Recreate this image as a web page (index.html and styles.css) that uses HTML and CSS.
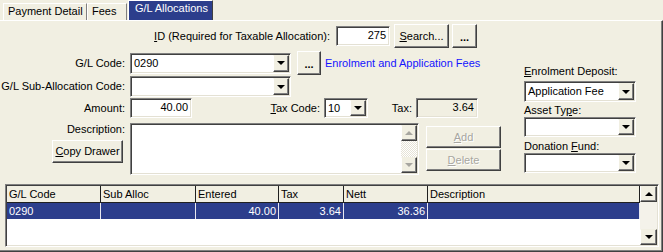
FILE: index.html
```html
<!DOCTYPE html>
<html lang="en">
<head>
    <meta charset="UTF-8">
    <title>G/L Allocations</title>
    <link rel="stylesheet" href="styles.css">
</head>
<body>
<div class="window">
    <div class="tabs">
        <div class="tab tab_first">Payment Detail</div>
        <div class="tab tab_fees">Fees</div>
        <div class="tab tab_active">G/L Allocations</div>
    </div>
    <div class="panel">
        <div class="id_row">
            <span class="id_label"><u>I</u>D (Required for Taxable Allocation):</span>
            <div class="edit edit_num id_edit">275</div>
            <div class="btn btn_search"><u>S</u>earch...</div>
            <div class="btn btn_dots btn_dots_id">...</div>
        </div>
        <div class="body">
            <div class="main">
                <div class="row row_gl">
                    <span class="lbl">G/L Code:</span>
                    <div class="combo combo_gl"><span class="combo_text">0290</span><span class="drop"></span></div>
                    <div class="btn btn_dots">...</div>
                    <span class="link">Enrolment and Application Fees</span>
                </div>
                <div class="row row_sub">
                    <span class="lbl">G/L Sub-Allocation Code:</span>
                    <div class="combo combo_gl"><span class="combo_text"></span><span class="drop"></span></div>
                </div>
                <div class="row row_amount">
                    <span class="lbl">Amount:</span>
                    <div class="edit edit_num amount_edit">40.00</div>
                    <span class="lbl_tax_code"><u>T</u>ax Code:</span>
                    <div class="combo combo_tax"><span class="combo_text">10</span><span class="drop"></span></div>
                    <span class="lbl_tax">Tax:</span>
                    <div class="edit edit_num edit_ro tax_edit">3.64</div>
                </div>
                <div class="row row_desc">
                    <div class="desc_side">
                        <span class="desc_label">Description:</span>
                        <div class="btn btn_copy"><u>C</u>opy Drawer</div>
                    </div>
                    <div class="memo">
                        <div class="memo_text"></div>
                        <div class="memo_scroll">
                            <div class="sbtn sbtn_off"><span class="arrow_up"></span></div>
                            <div class="memo_track"></div>
                            <div class="sbtn sbtn_off"><span class="arrow_down"></span></div>
                        </div>
                    </div>
                    <div class="actions">
                        <div class="btn btn_off btn_add"><u>A</u>dd</div>
                        <div class="btn btn_off btn_delete"><u>D</u>elete</div>
                    </div>
                </div>
            </div>
            <div class="side">
                <span class="side_label side_label_first"><u>E</u>nrolment Deposit:</span>
                <div class="combo combo_side combo_deposit"><span class="combo_text">Application Fee</span><span class="drop"></span></div>
                <span class="side_label side_label_asset">Asset Ty<u>p</u>e:</span>
                <div class="combo combo_side"><span class="combo_text"></span><span class="drop"></span></div>
                <span class="side_label side_label_fund">Donation <u>F</u>und:</span>
                <div class="combo combo_side"><span class="combo_text"></span><span class="drop"></span></div>
            </div>
        </div>
        <div class="grid">
            <div class="grid_table">
                <table>
                    <colgroup>
                        <col style="width:94px">
                        <col style="width:95px">
                        <col style="width:83px">
                        <col style="width:65px">
                        <col style="width:84px">
                        <col style="width:212px">
                    </colgroup>
                    <thead>
                    <tr>
                        <th>G/L Code</th>
                        <th>Sub Alloc</th>
                        <th>Entered</th>
                        <th>Tax</th>
                        <th>Nett</th>
                        <th>Description</th>
                    </tr>
                    </thead>
                    <tbody>
                    <tr class="selected">
                        <td>0290</td>
                        <td></td>
                        <td class="num">40.00</td>
                        <td class="num">3.64</td>
                        <td class="num">36.36</td>
                        <td></td>
                    </tr>
                    </tbody>
                </table>
            </div>
            <div class="grid_scroll">
                <div class="sbtn sbtn_grid"><span class="arrow_up"></span></div>
                <div class="grid_track"></div>
                <div class="sbtn sbtn_grid"><span class="arrow_down"></span></div>
            </div>
        </div>
    </div>
</div>
</body>
</html>
```

FILE: styles.css
```css
body {
    margin: 0;
    background: #f1efe2;
    font-family: "Liberation Sans", Arial, sans-serif;
    font-size: 11px;
    line-height: 13px;
    color: #000;
}
u {
    text-underline-offset: 1px;
}
.window {
    width: 663px;
    height: 252px;
    overflow: hidden;
}

/* tabs */
.tabs {
    display: flex;
    align-items: flex-end;
    height: 20px;
    padding-left: 3px;
}
.tab {
    box-sizing: border-box;
    height: 17px;
    padding: 1px 0 0 4px;
    border-top: 1px solid #fff;
    border-left: 1px solid #fff;
    border-right: 1px solid #808080;
    white-space: nowrap;
}
.tab_first {
    width: 84px;
}
.tab_fees {
    width: 40px;
}
.tab_active {
    width: 85px;
    height: 20px;
    margin-left: 1px;
    padding: 1px 0 0 6px;
    background: #2c3e8c;
    color: #fff;
    border-right-color: #404040;
}

/* panel */
.panel {
    box-sizing: border-box;
    width: 663px;
    height: 232px;
    padding-top: 3px;
    border-top: 1px solid #fff;
    border-right: 1px solid #404040;
    border-bottom: 1px solid #404040;
    box-shadow: inset -1px -1px 0 #808080;
}

/* common controls */
.edit {
    box-sizing: border-box;
    height: 20px;
    background: #fff;
    border: 1px solid;
    border-color: #808080 #fff #fff #808080;
    box-shadow: inset 1px 1px 0 #404040, inset -1px -1px 0 #e4e1d4;
    padding: 2px 3px 0 3px;
    white-space: nowrap;
}
.edit_num {
    text-align: right;
}
.edit_ro {
    background: #f1efe2;
}
.btn {
    box-sizing: border-box;
    display: flex;
    align-items: center;
    justify-content: center;
    background: #f1efe2;
    border: 1px solid;
    border-color: #fff #404040 #404040 #fff;
    box-shadow: inset -1px -1px 0 #808080;
    white-space: nowrap;
}
.btn_off {
    color: #a7a6a0;
    text-shadow: 1px 1px 0 #fff;
}
.btn_dots {
    width: 24px;
    height: 24px;
    font-weight: bold;
    padding-top: 3px;
}
.combo {
    box-sizing: border-box;
    display: flex;
    height: 21px;
    background: #fff;
    border: 1px solid;
    border-color: #808080 #fff #fff #808080;
    box-shadow: inset 1px 1px 0 #404040, inset -1px -1px 0 #e4e1d4;
    padding: 1px;
}
.combo_text {
    flex: 1;
    padding: 2px 0 0 2px;
    white-space: nowrap;
}
.drop {
    box-sizing: border-box;
    width: 16px;
    display: flex;
    align-items: center;
    justify-content: center;
    background: #f1efe2;
    border: 1px solid;
    border-color: #f1efe2 #404040 #404040 #fff;
    box-shadow: inset -1px -1px 0 #808080;
}
.drop::after {
    content: "";
    border-left: 4px solid transparent;
    border-right: 4px solid transparent;
    border-top: 4px solid #000;
    margin-left: -1px;
}

/* id row */
.id_row {
    display: flex;
    align-items: center;
    height: 24px;
}
.id_label {
    width: 330px;
    text-align: right;
}
.id_edit {
    width: 54px;
    margin-left: 6px;
}
.btn_search {
    width: 55px;
    height: 24px;
    margin-left: 4px;
}
.btn_dots_id {
    width: 25px;
    margin-left: 3px;
}

/* body */
.body {
    display: flex;
    margin-top: 3px;
}
.main {
    width: 524px;
}
.row {
    display: flex;
    align-items: center;
}
.lbl {
    width: 125px;
    text-align: right;
    white-space: nowrap;
}
.row_gl {
    height: 24px;
}
.row_gl .btn_dots {
    margin-left: 6px;
}
.combo_gl {
    width: 161px;
    margin-left: 5px;
}
.link {
    margin-left: 4px;
    color: #1414ff;
    white-space: nowrap;
}
.row_sub {
    height: 21px;
    margin-top: 1px;
}
.row_amount {
    height: 20px;
    margin-top: 1px;
}
.amount_edit {
    width: 62px;
    margin-left: 5px;
}
.lbl_tax_code {
    width: 128px;
    text-align: right;
}
.combo_tax {
    width: 44px;
    height: 20px;
    margin-left: 4px;
}
.lbl_tax {
    width: 44px;
    text-align: right;
}
.tax_edit {
    width: 62px;
    margin-left: 4px;
}

/* description */
.row_desc {
    align-items: flex-start;
    margin-top: 5px;
    height: 52px;
}
.desc_side {
    width: 125px;
    display: flex;
    flex-direction: column;
    align-items: flex-end;
}
.btn_copy {
    width: 71px;
    height: 23px;
    margin: 4px 2px 0 0;
}
.memo {
    box-sizing: border-box;
    display: flex;
    width: 289px;
    height: 52px;
    margin-left: 5px;
    background: #fff;
    border: 1px solid;
    border-color: #808080 #fff #fff #808080;
    box-shadow: inset 1px 1px 0 #404040, inset -1px -1px 0 #e4e1d4;
    padding: 1px;
}
.memo_text {
    flex: 1;
}
.memo_scroll {
    width: 16px;
    display: flex;
    flex-direction: column;
}
.memo_track {
    flex: 1;
    background: repeating-conic-gradient(#fff 0 25%, #e6e3d6 0 50%) 0 0 / 2px 2px;
}
.sbtn {
    box-sizing: border-box;
    height: 16px;
    display: flex;
    align-items: center;
    justify-content: center;
    background: #f1efe2;
    border: 1px solid;
    border-color: #f1efe2 #404040 #404040 #fff;
    box-shadow: inset -1px -1px 0 #808080;
}
.arrow_up {
    border-left: 4px solid transparent;
    border-right: 4px solid transparent;
    border-bottom: 4px solid #000;
}
.arrow_down {
    border-left: 4px solid transparent;
    border-right: 4px solid transparent;
    border-top: 4px solid #000;
}
.sbtn_off .arrow_up {
    border-bottom-color: #a7a6a0;
}
.sbtn_off .arrow_down {
    border-top-color: #a7a6a0;
}
.actions {
    display: flex;
    flex-direction: column;
    margin-left: 7px;
}
.btn_add,
.btn_delete {
    width: 75px;
    height: 22px;
}
.btn_add {
    margin-top: 3px;
}
.btn_delete {
    margin-top: 1px;
}

/* right column */
.side {
    width: 112px;
    display: flex;
    flex-direction: column;
    margin-top: 14px;
}
.side_label {
    white-space: nowrap;
}
.combo_side {
    height: 20px;
}
.combo_deposit {
    height: 21px;
    margin-top: 3px;
}
.side_label_asset {
    margin-top: 2px;
}
.side_label_fund {
    margin-top: 3px;
}

/* grid */
.grid {
    box-sizing: border-box;
    display: flex;
    width: 654px;
    height: 63px;
    margin: 9px 0 0 5px;
    background: #fff;
    border: 1px solid;
    border-color: #808080 #fff #fff #808080;
    box-shadow: inset 1px 1px 0 #404040, inset -1px -1px 0 #e4e1d4;
    padding: 1px;
}
.grid_table {
    width: 633px;
}
table {
    border-collapse: separate;
    border-spacing: 0;
    table-layout: fixed;
    width: 633px;
}
th {
    box-sizing: border-box;
    height: 17px;
    padding: 0 2px;
    font-weight: normal;
    text-align: left;
    line-height: 16px;
    background: #f1efe2;
    border-right: 1px solid #202020;
    border-bottom: 1px solid #202020;
    white-space: nowrap;
}
td {
    height: 16px;
    padding: 0 2px;
    line-height: 16px;
    border-right: 1px solid #e8e8f0;
    white-space: nowrap;
}
td.num {
    text-align: right;
}
.selected td {
    background: #2c3e8c;
    color: #fff;
}
.grid_scroll {
    width: 17px;
    display: flex;
    flex-direction: column;
}
.grid_track {
    flex: 1;
    background: #f4f2ea;
}
```
